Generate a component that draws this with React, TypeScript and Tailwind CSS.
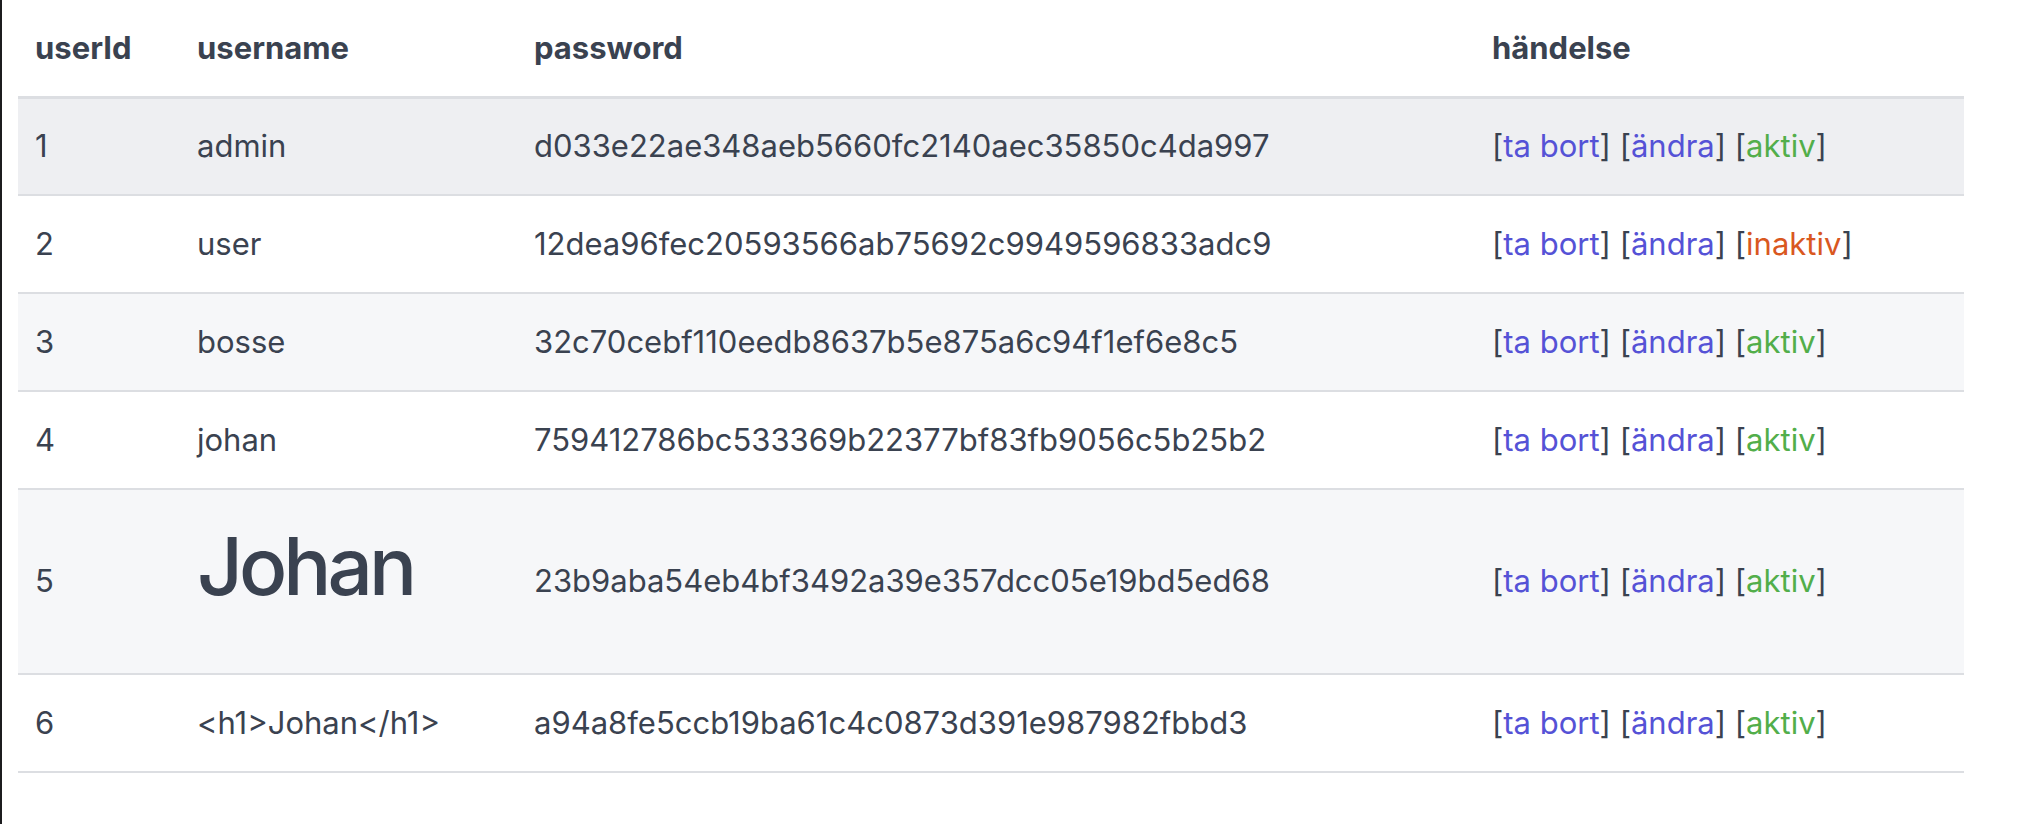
import React from 'react';

type User = { id: number; username: string; password: string; active: boolean; big?: boolean };

const users: User[] = [
  { id: 1, username: 'admin', password: 'd033e22ae348aeb5660fc2140aec35850c4da997', active: true },
  { id: 2, username: 'user', password: '12dea96fec20593566ab75692c9949596833adc9', active: false },
  { id: 3, username: 'bosse', password: '32c70cebf110eedb8637b5e875a6c94f1ef6e8c5', active: true },
  { id: 4, username: 'johan', password: '759412786bc533369b22377bf83fb9056c5b25b2', active: true },
  { id: 5, username: 'Johan', password: '23b9aba54eb4bf3492a39e357dcc05e19bd5ed68', active: true, big: true },
  { id: 6, username: '<h1>Johan</h1>', password: 'a94a8fe5ccb19ba61c4c0873d391e987982fbbd3', active: true },
];

export default function App() {
  return (
    <div
      className="min-h-[824px] bg-white border-l-2 border-[#1c1c1e] pl-4 pr-[54px] text-[#3a4250]"
      style={{ fontFamily: 'Inter, "Liberation Sans", sans-serif' }}
    >
      <table className="w-full table-fixed border-collapse text-left text-[31px]">
        <colgroup>
          <col className="w-[162px]" />
          <col className="w-[337px]" />
          <col className="w-[958px]" />
          <col />
        </colgroup>
        <thead>
          <tr className="border-b-[3px] border-[#dcdee2]">
            <th className="h-[97px] pl-[17px] font-bold align-middle">userId</th>
            <th className="h-[97px] pl-[17px] font-bold align-middle">username</th>
            <th className="h-[97px] pl-[17px] font-bold align-middle">password</th>
            <th className="h-[97px] pl-[17px] font-bold align-middle">händelse</th>
          </tr>
        </thead>
        <tbody>
          {users.map((u) => {
            // rad 1 är markerad (hover), varannan rad är gråtonad
            const bg = u.id === 1 ? 'bg-[#eeeff2]' : u.id % 2 === 1 ? 'bg-[#f6f7f9]' : 'bg-white';
            return (
              <tr key={u.id} className={`${bg} border-b-2 border-[#dcdee2]`}>
                <td className="h-[98px] pl-[17px] align-middle">{u.id}</td>
                <td className="h-[98px] pl-[17px] align-middle">
                  {u.big ? (
                    <h1 className="text-[80px] leading-[96px] font-medium tracking-[-0.05em] mt-[28px] mb-[59px]">
                      {u.username}
                    </h1>
                  ) : (
                    u.username
                  )}
                </td>
                <td className="h-[98px] pl-[17px] align-middle">{u.password}</td>
                <td className="h-[98px] pl-[17px] align-middle whitespace-nowrap">
                  [<a className="text-[#5552d6]">ta bort</a>] [<a className="text-[#5552d6]">ändra</a>] [
                  {u.active ? (
                    <a className="text-[#52ae4a]">aktiv</a>
                  ) : (
                    <a className="text-[#d9581f]">inaktiv</a>
                  )}
                  ]
                </td>
              </tr>
            );
          })}
        </tbody>
      </table>
    </div>
  );
}
